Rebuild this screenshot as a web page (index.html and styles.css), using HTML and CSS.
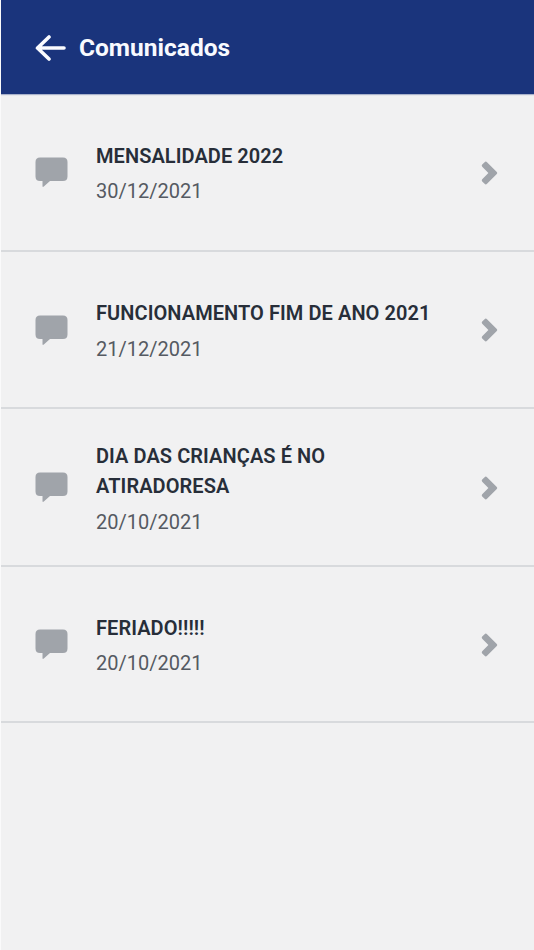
FILE: index.html
```html
<!DOCTYPE html>
<html lang="pt-BR">
<head>
<meta charset="utf-8">
<title>Comunicados</title>
<link rel="stylesheet" href="styles.css">
</head>
<body>
<svg class="defs" aria-hidden="true">
  <symbol id="bubble" viewBox="0 0 33 31"><path d="M5 0.500H28Q32.500 0.500 32.500 5V19.500Q32.500 24 28 24H15L8.800 29.600Q7.500 30.500 7.500 29V24H5Q0.500 24 0.500 19.500V5Q0.500 0.500 5 0.500Z"/></symbol>
  <symbol id="chevron" viewBox="0 0 18 26"><path d="M1.200 4.600L3.600 2.200Q4.800 1 6 2.200L15.800 12Q16.800 13 15.800 14L6 23.800Q4.800 25 3.600 23.800L1.200 21.400Q0.200 20.300 1.200 19.200L7.400 13L1.200 6.800Q0.200 5.700 1.200 4.600Z"/></symbol>
</svg>
<header class="topbar">
  <svg class="back" viewBox="0 0 32 28"><path d="M29 14H3M14 3L2.500 14L14 25"/></svg>
  <h1>Comunicados</h1>
</header>
<main class="list">
  <article class="row">
    <svg class="bubble"><use href="#bubble"/></svg>
    <div class="body"><h2>MENSALIDADE 2022</h2><p>30/12/2021</p></div>
    <svg class="chevron"><use href="#chevron"/></svg>
  </article>
  <article class="row">
    <svg class="bubble"><use href="#bubble"/></svg>
    <div class="body"><h2>FUNCIONAMENTO FIM DE ANO 2021</h2><p>21/12/2021</p></div>
    <svg class="chevron"><use href="#chevron"/></svg>
  </article>
  <article class="row">
    <svg class="bubble"><use href="#bubble"/></svg>
    <div class="body"><h2>DIA DAS CRIANÇAS É NO<br>ATIRADORESA</h2><p>20/10/2021</p></div>
    <svg class="chevron"><use href="#chevron"/></svg>
  </article>
  <article class="row last">
    <svg class="bubble"><use href="#bubble"/></svg>
    <div class="body"><h2>FERIADO!!!!!</h2><p>20/10/2021</p></div>
    <svg class="chevron"><use href="#chevron"/></svg>
  </article>
</main>
</body>
</html>
```
FILE: styles.css
```css
* { box-sizing: border-box; }
body {
  margin: 0;
  min-height: 950px;
  background: #f1f1f2;
  border-left: 1px solid #fafafb;
  font-family: Roboto, sans-serif;
}
h1, h2, p { margin: 0; }
.defs { display: none; }
.topbar {
  height: 94px;
  padding: 1px 0 0 34px;
  display: flex;
  align-items: center;
  background: #1a347c;
  box-shadow: 0 1px 1px #a9b2cb;
}
.back {
  width: 32px;
  height: 28px;
  margin-right: 12px;
  fill: none;
  stroke: #fafbff;
  stroke-width: 3.600;
  stroke-linecap: round;
  stroke-linejoin: round;
}
.topbar h1 {
  color: #f8faff;
  font-size: 24.500px;
  font-weight: 700;
  line-height: 30px;
}
.row {
  height: 157.500px;
  padding: 2px 35px 0 33.500px;
  display: flex;
  align-items: center;
  border-bottom: 2px solid #d8dadd;
}
.last { height: 156.500px; }
.bubble {
  flex: none;
  width: 33px;
  height: 31px;
  margin-right: 28.500px;
  fill: #a0a4aa;
}
.body {
  flex: 1;
  padding-top: 2px;
  white-space: nowrap;
}
.body h2 {
  color: #272e39;
  font-size: 20px;
  font-weight: 600;
  line-height: 30.500px;
  letter-spacing: 0.070px;
}
.body p {
  margin-top: 5px;
  color: #555a62;
  font-size: 20px;
  line-height: 30.500px;
}
.chevron {
  flex: none;
  width: 18px;
  height: 26px;
  fill: #a0a4aa;
}
```
